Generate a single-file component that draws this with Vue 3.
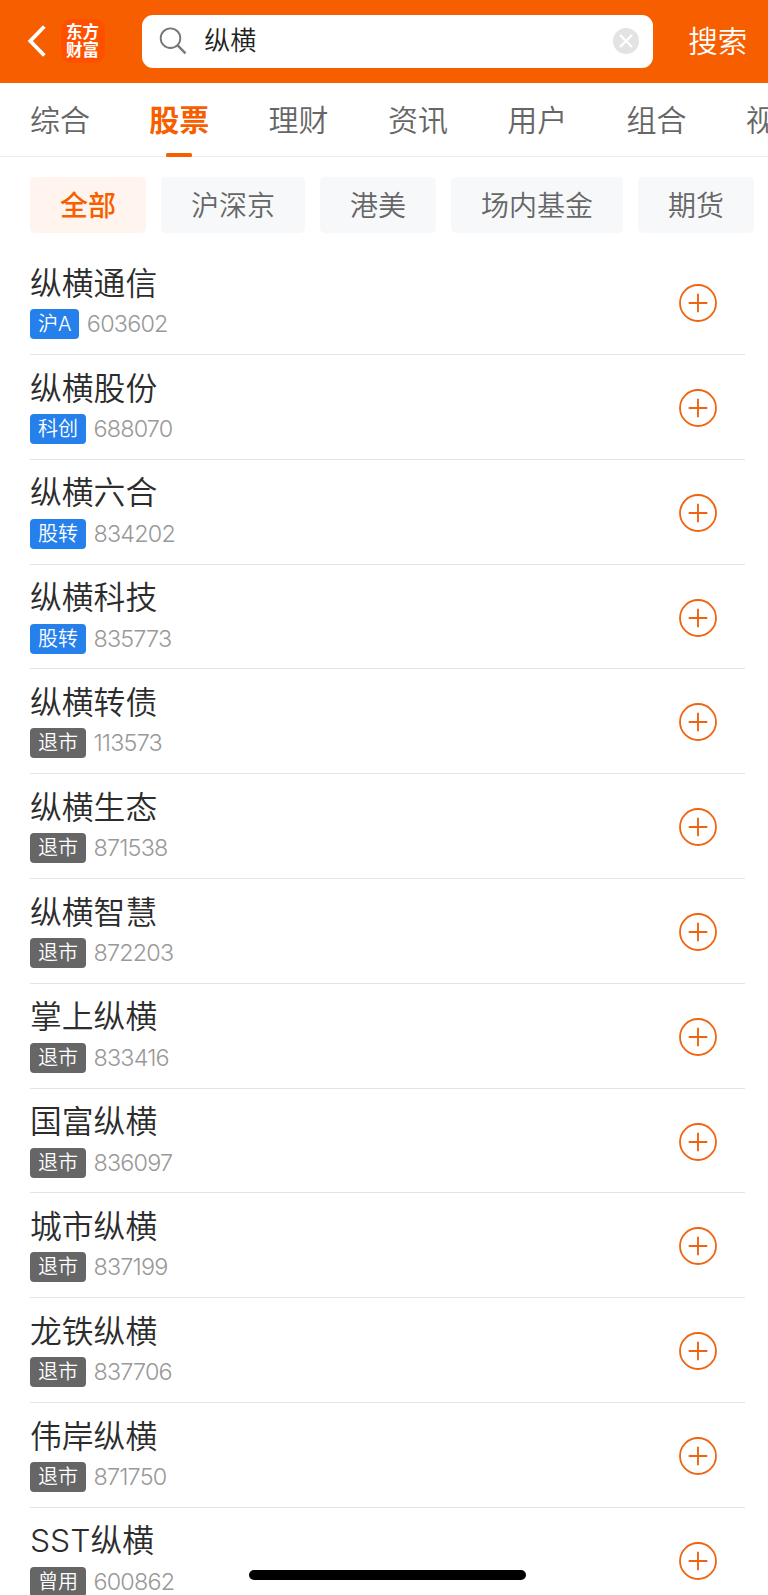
<template>
  <div class="page">
    <header class="header">
      <svg class="back" width="20" height="34" viewBox="0 0 20 34">
        <path d="M18.3 2.5 L4.3 17 L18.3 31.5" fill="none" stroke="#fff" stroke-width="3.8" />
      </svg>
      <div class="logo">
        <span>东方</span>
        <span>财富</span>
      </div>
      <div class="search-box">
        <svg class="search-icon" width="28" height="28" viewBox="0 0 28 28">
          <circle cx="11.5" cy="11.2" r="9.8" fill="none" stroke="#777" stroke-width="1.9" />
          <path d="M18.6 18.4 L26.5 26.4" stroke="#777" stroke-width="2.4" />
        </svg>
        <span class="keyword">{{ keyword }}</span>
        <svg class="clear" width="26" height="26" viewBox="0 0 26 26">
          <circle cx="13" cy="13" r="13" fill="#e3e3e3" />
          <path d="M7 7 L19 19 M19 7 L7 19" stroke="#fff" stroke-width="2.4" />
        </svg>
      </div>
      <span class="search-btn">搜索</span>
    </header>

    <nav class="tabs">
      <span
        v-for="tab in tabs"
        :key="tab"
        class="tab"
        :class="{ active: tab === activeTab }"
        @click="activeTab = tab"
      >{{ tab }}</span>
    </nav>

    <div class="filters">
      <span
        v-for="filter in filters"
        :key="filter"
        class="filter"
        :class="{ active: filter === activeFilter }"
        @click="activeFilter = filter"
      >{{ filter }}</span>
    </div>

    <ul class="list">
      <li v-for="stock in stocks" :key="stock.code" class="row">
        <div class="info">
          <div class="name">{{ stock.name }}</div>
          <div class="meta">
            <span class="tag" :class="{ gray: stock.gray }">{{ stock.tag }}</span>
            <span class="code">{{ stock.code }}</span>
          </div>
        </div>
        <svg class="add" width="38" height="38" viewBox="0 0 38 38">
          <circle cx="19" cy="19" r="18" fill="none" stroke="#f0640f" stroke-width="1.8" />
          <path d="M19 9.7 V28.3 M9.7 19 H28.3" stroke="#f0640f" stroke-width="1.9" />
        </svg>
      </li>
    </ul>

    <div class="home-bar"></div>
  </div>
</template>

<script setup>
import { ref } from 'vue';

const keyword = ref('纵横');
const activeTab = ref('股票');
const activeFilter = ref('全部');

const tabs = ['综合', '股票', '理财', '资讯', '用户', '组合', '视频'];
const filters = ['全部', '沪深京', '港美', '场内基金', '期货'];

const stocks = [
  { name: '纵横通信', tag: '沪A', code: '603602' },
  { name: '纵横股份', tag: '科创', code: '688070' },
  { name: '纵横六合', tag: '股转', code: '834202' },
  { name: '纵横科技', tag: '股转', code: '835773' },
  { name: '纵横转债', tag: '退市', code: '113573', gray: true },
  { name: '纵横生态', tag: '退市', code: '871538', gray: true },
  { name: '纵横智慧', tag: '退市', code: '872203', gray: true },
  { name: '掌上纵横', tag: '退市', code: '833416', gray: true },
  { name: '国富纵横', tag: '退市', code: '836097', gray: true },
  { name: '城市纵横', tag: '退市', code: '837199', gray: true },
  { name: '龙铁纵横', tag: '退市', code: '837706', gray: true },
  { name: '伟岸纵横', tag: '退市', code: '871750', gray: true },
  { name: 'SST纵横', tag: '曾用', code: '600862', gray: true },
];
</script>

<style>
body {
  margin: 0;
  background: #fff;
}
</style>

<style scoped>
.page {
  position: relative;
  box-sizing: border-box;
  width: 768px;
  height: 1595px;
  overflow: hidden;
  background: #fff;
  font-family: Inter, "Noto Sans CJK SC", sans-serif;
  font-weight: 350;
}

.header {
  display: flex;
  align-items: center;
  box-sizing: border-box;
  height: 82.6px;
  padding-left: 26px;
  background: #f75e00;
}

.logo {
  display: flex;
  flex-direction: column;
  align-items: center;
  justify-content: center;
  width: 44px;
  height: 44px;
  margin-left: 14.5px;
  border-radius: 10px;
  background: #ff5000;
  color: #fff;
  font-size: 16.5px;
  font-weight: 700;
  line-height: 18px;
}

.search-box {
  display: flex;
  align-items: center;
  box-sizing: border-box;
  width: 511px;
  height: 53px;
  margin-left: 37.8px;
  padding: 0 14px 0 17px;
  border-radius: 11px;
  background: #fff;
}

.keyword {
  flex: 1;
  margin-left: 17px;
  color: #222;
  font-size: 26px;
  line-height: 36px;
}

.search-btn {
  margin-left: 35px;
  color: #fff;
  font-size: 29.5px;
  line-height: 40px;
}

.tabs {
  display: flex;
  gap: 59.3px;
  box-sizing: border-box;
  height: 74.4px;
  padding-left: 30px;
  border-bottom: 1px solid #ebebeb;
}

.tab {
  position: relative;
  flex: none;
  color: #666;
  font-size: 30px;
  line-height: 75px;
}

.tab.active {
  color: #f75e00;
  font-weight: 700;
}

.tab.active::after {
  content: '';
  position: absolute;
  left: 17px;
  bottom: -1px;
  width: 26px;
  height: 4px;
  border-radius: 1.5px;
  background: #f75e00;
}

.filters {
  display: flex;
  gap: 15px;
  padding: 20px 0 0 30px;
}

.filter {
  flex: none;
  height: 56px;
  padding: 0 30px;
  border-radius: 5px;
  background: #f7f8fa;
  color: #666;
  font-size: 28px;
  line-height: 59px;
}

.filter.active {
  background: #fff5ee;
  color: #f75e00;
  font-weight: 500;
}

.list {
  margin: 0;
  padding: 17.3px 23px 0 30px;
  list-style: none;
}

.row {
  display: flex;
  align-items: flex-start;
  justify-content: space-between;
  box-sizing: border-box;
  height: 104.8px;
  padding: 9.5px 28px 0 0;
  border-bottom: 1px solid #e4e4e4;
}

.name {
  color: #2c2c2c;
  font-size: 31.8px;
  line-height: 47px;
}

.meta {
  display: flex;
  align-items: center;
  margin-top: 2.5px;
}

.tag {
  height: 30px;
  padding: 0 8px;
  border-radius: 4px;
  background: #2680eb;
  color: #fff;
  font-size: 20px;
  line-height: 31px;
}

.tag.gray {
  background: #666;
}

.code {
  margin-left: 7.4px;
  color: #999;
  font-size: 23.4px;
  line-height: 30px;
  letter-spacing: -0.8px;
}

.add {
  margin-top: 24.5px;
}

.home-bar {
  position: absolute;
  left: 249px;
  bottom: 15.5px;
  width: 277px;
  height: 10px;
  border-radius: 5px;
  background: #000;
}
</style>
